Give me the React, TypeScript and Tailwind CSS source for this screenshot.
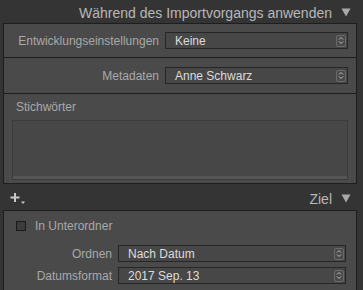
import React from "react";

const Stepper = () => (
  <div className="flex h-[12px] w-[10px] flex-col items-center justify-center rounded-[2px] border border-[#6a6a6a] bg-[#4a4a4a]">
    <svg width="6" height="9" viewBox="0 0 6 9">
      <path d="M1 3.5 L3 1.5 L5 3.5" fill="none" stroke="#bdbdbd" strokeWidth="1" />
      <path d="M1 5.5 L3 7.5 L5 5.5" fill="none" stroke="#bdbdbd" strokeWidth="1" />
    </svg>
  </div>
);

const Select = ({ value, width }: { value: string; width: string }) => (
  <div
    className={`flex h-[17px] items-center justify-between border border-[#262626] bg-[#474747] pl-[9px] pr-[1px] ${width}`}
  >
    <span className="text-[12px] leading-none text-[#dcdcdc]">{value}</span>
    <Stepper />
  </div>
);

const Triangle = () => (
  <svg width="10" height="9" viewBox="0 0 10 9">
    <path d="M0.5 0.5 L9.5 0.5 L5 8.5 Z" fill="#a9a9a9" />
  </svg>
);

const App = () => {
  return (
    <div
      className="h-[290px] w-[363px] overflow-hidden bg-[#343434]"
      style={{ fontFamily: '"Liberation Sans", Arial, sans-serif' }}
    >
      {/* Import settings header */}
      <div className="flex h-[23px] items-center justify-end gap-[9px] pr-[12px] pt-[2px]">
        <span className="text-[14px] leading-none text-[#b8b8b8]">
          Während des Importvorgangs anwenden
        </span>
        <Triangle />
      </div>

      <div className="ml-[3px] mr-[6px] border border-[#1e1e1e] bg-[#4a4a4a]">
        <div className="flex h-[34px] items-center gap-[6px] border-b border-[#1e1e1e]">
          <span className="w-[155px] text-right text-[12px] leading-[14px] text-[#a9a9a9]">
            Entwicklungseinstellungen
          </span>
          <Select value="Keine" width="w-[183px]" />
        </div>
        <div className="flex h-[36px] items-center gap-[6px] border-b border-[#1e1e1e]">
          <span className="w-[155px] text-right text-[12px] leading-[14px] text-[#a9a9a9]">
            Metadaten
          </span>
          <Select value="Anne Schwarz" width="w-[183px]" />
        </div>
        <div className="px-[8px] pb-[3px] pt-[6px]">
          <div className="mb-[6px] pl-[4px] text-[12px] leading-[14px] text-[#a9a9a9]">
            Stichwörter
          </div>
          <div className="h-[60px] border border-[#3c3c3c] bg-[#474747] shadow-[inset_0_-3px_0_#555]" />
        </div>
      </div>

      {/* Destination header */}
      <div className="flex h-[26px] items-center justify-between pl-[10px] pr-[12px] pt-[3px]">
        <svg width="16" height="13" viewBox="0 0 16 13">
          <path d="M5 1 V10 M0.5 5.5 H9.5" stroke="#c8c8c8" strokeWidth="2" />
          <path d="M11 9.5 H15 L13 12 Z" fill="#c8c8c8" />
        </svg>
        <div className="flex items-center gap-[9px]">
          <span className="text-[14px] leading-none text-[#b8b8b8]">Ziel</span>
          <Triangle />
        </div>
      </div>

      <div className="ml-[3px] mr-[6px] h-[90px] border border-[#1e1e1e] bg-[#4a4a4a]">
        <div className="flex h-[30px] items-center gap-[9px] pl-[12px]">
          <div className="h-[10px] w-[10px] border border-[#1a1a1a] bg-[#3c3c3c]" />
          <span className="text-[12px] leading-[14px] text-[#a9a9a9]">In Unterordner</span>
        </div>
        <div className="flex flex-col gap-[5px] pt-[4px]">
          <div className="flex items-center gap-[6px]">
            <span className="w-[108px] text-right text-[12px] leading-[14px] text-[#a9a9a9]">
              Ordnen
            </span>
            <Select value="Nach Datum" width="w-[228px]" />
          </div>
          <div className="flex items-center gap-[6px]">
            <span className="w-[108px] text-right text-[12px] leading-[14px] text-[#a9a9a9]">
              Datumsformat
            </span>
            <Select value="2017 Sep. 13" width="w-[228px]" />
          </div>
        </div>
      </div>
    </div>
  );
};

export default App;
